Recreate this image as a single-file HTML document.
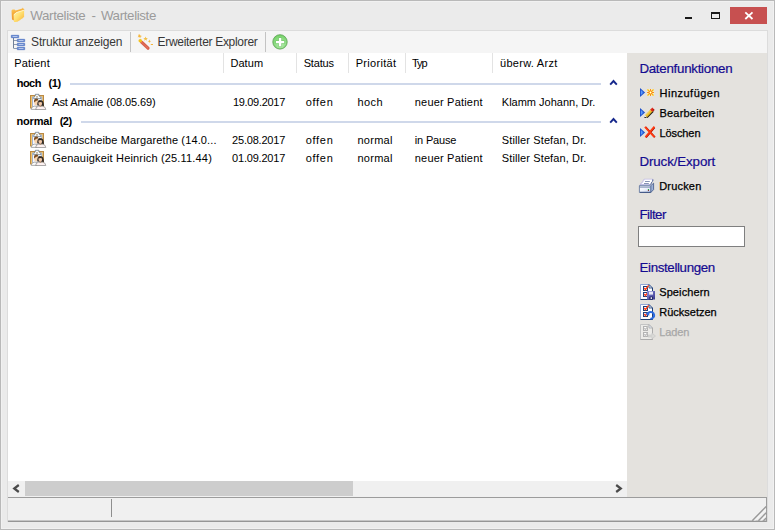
<!DOCTYPE html>
<html lang="de"><head><meta charset="utf-8"><title>Warteliste - Warteliste</title>
<style>
html,body{margin:0;padding:0}
body{width:775px;height:530px;overflow:hidden;position:relative;background:#ebebeb;font-family:"Liberation Sans", sans-serif}
.a{position:absolute}
.x{position:absolute;white-space:pre;line-height:1}
svg{position:absolute;overflow:visible}

.win{left:0;top:0;width:773px;height:528px;border:1px solid #b9b9b9;background:#ebebeb;box-shadow:inset 0 0 0 1px #f1f1f1}
.frame{left:7px;top:30px;width:759px;height:490px;border:1px solid #dcdcdc;background:#fff}
.tb{left:8px;top:31px;width:759px;height:22px;background:#f5f5f5}
.sep{width:1px;height:20px;top:32px;background:#c3c3c3}
.side{left:627px;top:53px;width:140px;height:444px;background:#e4e2de}
.hsep{width:1px;top:53px;height:20px;background:#e3e3e3}
.gl{height:2px;background:#cfd8ea}
.sbt{left:8px;top:481px;width:619px;height:16px;background:#f0f0f0}
.sbth{left:25px;top:481px;width:328px;height:15px;background:#cdcdcd}
.stat{left:8px;top:497px;width:759px;height:23px;background:#f0f0f0;border-top:1px solid #9c9c9c;border-bottom:1px solid #c6c6c6;box-sizing:border-box;height:24px}
.inp{left:638px;top:226px;width:105px;height:19px;border:1px solid #7f7f7f;background:#fff}
.close{left:730px;top:7px;width:37px;height:17px;background:#c75050}

</style></head><body>

<div class="a win"></div>
<div class="a frame"></div>
<!-- title bar -->
<svg style="left:11px;top:7px" width="15" height="16" viewBox="0 0 15 16">
<defs><linearGradient id="fo" x1="0" y1="0" x2="1" y2="1"><stop offset="0" stop-color="#fff6b8"/><stop offset="0.5" stop-color="#ffdf70"/><stop offset="1" stop-color="#f7b036"/></linearGradient><linearGradient id="fb" x1="0" y1="0" x2="0.3" y2="1"><stop offset="0" stop-color="#ffd266"/><stop offset="0.5" stop-color="#f5a935"/><stop offset="1" stop-color="#ee9a2c"/></linearGradient></defs>
<path d="M0.5 3.4 L1.5 2.5 L3.6 2.5 L4.6 3.6 L11.3 1.4 L11.6 0.6 L12.4 1.6 L13.6 2.9 L5.5 5.4 L2.9 7.8 L2.9 13.4 L1 12.4 Z" fill="url(#fb)"/>
<path d="M2.7 7.6 L5.5 5.2 L13.1 2.9 L13.1 10.3 L12 10.5 L12 11.2 L10.8 11.4 L10.8 12.1 L9.6 12.3 L9.6 13 L8.4 13.2 L8.4 13.8 L7.2 14 L7.2 14.6 L6 14.7 L4.6 14.9 L3 14.9 Z" fill="url(#fo)"/>
<path d="M2.9 7.8 L5.6 5.5 L13 3.2" fill="none" stroke="#fffbe0" stroke-width="0.7"/>
</svg>
<div class="a" style="left:685px;top:17px;width:7px;height:2px;background:#1a1a1a"></div>
<div class="a" style="left:711px;top:12px;width:7px;height:4px;border:1px solid #1a1a1a;border-top-width:2px"></div>
<div class="a close"></div>
<svg style="left:744px;top:11px" width="10" height="9" viewBox="0 0 10 9"><path d="M1.3 1.4 L8.5 8 M8.5 1.4 L1.3 8" stroke="#fff" stroke-width="1.8" fill="none"/></svg>
<!-- toolbar -->
<div class="a tb"></div>
<svg style="left:11px;top:35px" width="14" height="15" viewBox="0 0 14 15">
<path d="M2.5 3 V13.5" fill="none" stroke="#70809a" stroke-width="1"/><path d="M3 13.5 H6 M3 5.5 H6 M3 9.5 H6" fill="none" stroke="#8e9bb0" stroke-width="1"/>
<g fill="#5b80cc" stroke="#4a6fc0" stroke-width="0.6"><rect x="0.3" y="0.3" width="7.4" height="2.4" rx="0.25"/><rect x="6.3" y="4.3" width="7.4" height="2.4" rx="0.25"/><rect x="6.3" y="8.3" width="7.4" height="2.4" rx="0.25"/><rect x="6.3" y="12.3" width="7.4" height="2.4" rx="0.25"/></g>
<g fill="#b4c6ec"><rect x="1.5" y="1" width="5" height="1"/><rect x="7.5" y="5" width="5" height="1"/><rect x="7.5" y="9" width="5" height="1"/><rect x="7.5" y="13" width="5" height="1"/></g>
</svg>
<div class="a sep" style="left:130px"></div>
<svg style="left:137px;top:33px" width="17" height="17" viewBox="0 0 17 17">
<path d="M4.6 9.2 L11 15.2" stroke="#d9604a" stroke-width="3.2" stroke-linecap="round"/>
<path d="M4.4 9 L11 15.2" stroke="#f0907a" stroke-width="1" stroke-dasharray="0.8 0.8"/>
<circle cx="3.3" cy="7.8" r="1.8" fill="#f2c21e"/>
<path d="M2.6 0.8 L3.3 2.4 L5 2.9 L3.5 3.7 L3.3 5.4 L2.3 4 L0.6 4.2 L1.6 2.9 L1 1.4 L2.3 2.1 Z" fill="#f5b63c"/>
<path d="M8.6 3.4 L9.2 5 L11 5 L9.6 6.1 L10.1 7.8 L8.6 6.8 L7.2 7.8 L7.6 6.1 L6.2 5 L8 5 Z" fill="#f2c04a"/>
<path d="M12.4 6.6 L12.9 7.8 L14.1 8.3 L12.9 8.8 L12.4 10 L11.9 8.8 L10.7 8.3 L11.9 7.8 Z" fill="#f5b63c"/>
<rect x="13.8" y="11" width="2.2" height="1" fill="#f5b63c"/>
</svg>
<div class="a sep" style="left:265px"></div>
<svg style="left:272px;top:34px" width="16" height="16" viewBox="0 0 16 16">
<defs><radialGradient id="gp" cx="0.55" cy="0.7" r="0.75"><stop offset="0" stop-color="#b4eaac"/><stop offset="0.55" stop-color="#8edc84"/><stop offset="1" stop-color="#6fd062"/></radialGradient></defs>
<circle cx="8" cy="7.9" r="7.7" fill="#cfcfcf"/>
<circle cx="8" cy="7.9" r="7.1" fill="url(#gp)" stroke="#62b058" stroke-width="0.9"/>
<path d="M6.5 3.6 H9.7 V6.5 H12.6 V9.7 H9.7 V12.6 H6.5 V9.7 H3.6 V6.5 H6.5 Z" fill="#6cc062"/><path d="M6.9 4 H9.3 V6.9 H12.2 V9.3 H9.3 V12.2 H6.9 V9.3 H4 V6.9 H6.9 Z" fill="#fff"/>
</svg>
<!-- list -->
<div class="a hsep" style="left:223px"></div>
<div class="a hsep" style="left:296px"></div>
<div class="a hsep" style="left:348px"></div>
<div class="a hsep" style="left:405px"></div>
<div class="a hsep" style="left:492px"></div>
<div class="a gl" style="left:70px;top:83px;width:531px"></div>
<div class="a gl" style="left:81px;top:121px;width:520px"></div>
<svg style="left:609px;top:79px" width="9" height="7" viewBox="0 0 9 7"><path d="M1.2 5.6 L4.5 2 L7.8 5.6" fill="none" stroke="#16288c" stroke-width="1.9"/></svg>
<svg style="left:609px;top:117px" width="9" height="7" viewBox="0 0 9 7"><path d="M1.2 5.6 L4.5 2 L7.8 5.6" fill="none" stroke="#16288c" stroke-width="1.9"/></svg>
<svg style="left:30px;top:94px" width="16" height="16" viewBox="0 0 16 16">
<rect x="0.5" y="1.5" width="13" height="12.5" fill="#f4c466" stroke="#bb8a44"/>
<rect x="2.4" y="3" width="9.4" height="11" fill="#f4f7fd" stroke="#92a8d2" stroke-width="0.8"/>
<path d="M3.6 4.6 L3.9 3.4 L5.3 1.6 L5.3 0.3 L8.9 0.3 L8.9 1.6 L10.6 3.4 L11 4.6 Z" fill="#f7fafb" stroke="#5d6f7c" stroke-width="0.7"/>
<rect x="6.5" y="2.2" width="1" height="1.4" fill="#7a5a2a"/>
<path d="M1.2 15.4 Q1.3 12.6 4.2 12.2 L7 12.2 L7 15.4 Z" fill="#fcfcfc" stroke="#8c8c8c" stroke-width="0.7"/>
<ellipse cx="6.1" cy="8.6" rx="1.9" ry="3" fill="#f8d4ae"/>
<path d="M4 7.6 Q3.9 4.6 6.4 4.6 Q8.6 4.7 8.3 6.6 Q6 5.8 4.6 8.6 Z" fill="#7e4e22"/>
<path d="M7.3 11.6 Q6.8 5.8 10.4 5.9 Q14 5.9 13.9 12 Z" fill="#2c2826"/>
<path d="M5.6 15.5 Q5.8 12.6 8.6 12.2 L12.6 12.2 Q15.7 12.6 15.8 15.5 Z" fill="#fdf1f1" stroke="#868686" stroke-width="0.7"/>
<rect x="9.6" y="10.6" width="1.6" height="2.2" fill="#b48a6a"/>
<ellipse cx="10.3" cy="9" rx="1.9" ry="2.5" fill="#efc6a6"/>
<path d="M8.3 8.6 Q8.6 6.4 10.6 6.5 Q12.4 6.7 12.4 8.8 Q10.6 7.4 8.3 8.6Z" fill="#2c2826"/>
</svg>
<svg style="left:30px;top:132px" width="16" height="16" viewBox="0 0 16 16">
<rect x="0.5" y="1.5" width="13" height="12.5" fill="#f4c466" stroke="#bb8a44"/>
<rect x="2.4" y="3" width="9.4" height="11" fill="#f4f7fd" stroke="#92a8d2" stroke-width="0.8"/>
<path d="M3.6 4.6 L3.9 3.4 L5.3 1.6 L5.3 0.3 L8.9 0.3 L8.9 1.6 L10.6 3.4 L11 4.6 Z" fill="#f7fafb" stroke="#5d6f7c" stroke-width="0.7"/>
<rect x="6.5" y="2.2" width="1" height="1.4" fill="#7a5a2a"/>
<path d="M1.2 15.4 Q1.3 12.6 4.2 12.2 L7 12.2 L7 15.4 Z" fill="#fcfcfc" stroke="#8c8c8c" stroke-width="0.7"/>
<ellipse cx="6.1" cy="8.6" rx="1.9" ry="3" fill="#f8d4ae"/>
<path d="M4 7.6 Q3.9 4.6 6.4 4.6 Q8.6 4.7 8.3 6.6 Q6 5.8 4.6 8.6 Z" fill="#7e4e22"/>
<path d="M7.3 11.6 Q6.8 5.8 10.4 5.9 Q14 5.9 13.9 12 Z" fill="#2c2826"/>
<path d="M5.6 15.5 Q5.8 12.6 8.6 12.2 L12.6 12.2 Q15.7 12.6 15.8 15.5 Z" fill="#fdf1f1" stroke="#868686" stroke-width="0.7"/>
<rect x="9.6" y="10.6" width="1.6" height="2.2" fill="#b48a6a"/>
<ellipse cx="10.3" cy="9" rx="1.9" ry="2.5" fill="#efc6a6"/>
<path d="M8.3 8.6 Q8.6 6.4 10.6 6.5 Q12.4 6.7 12.4 8.8 Q10.6 7.4 8.3 8.6Z" fill="#2c2826"/>
</svg>
<svg style="left:30px;top:150px" width="16" height="16" viewBox="0 0 16 16">
<rect x="0.5" y="1.5" width="13" height="12.5" fill="#f4c466" stroke="#bb8a44"/>
<rect x="2.4" y="3" width="9.4" height="11" fill="#f4f7fd" stroke="#92a8d2" stroke-width="0.8"/>
<path d="M3.6 4.6 L3.9 3.4 L5.3 1.6 L5.3 0.3 L8.9 0.3 L8.9 1.6 L10.6 3.4 L11 4.6 Z" fill="#f7fafb" stroke="#5d6f7c" stroke-width="0.7"/>
<rect x="6.5" y="2.2" width="1" height="1.4" fill="#7a5a2a"/>
<path d="M1.2 15.4 Q1.3 12.6 4.2 12.2 L7 12.2 L7 15.4 Z" fill="#fcfcfc" stroke="#8c8c8c" stroke-width="0.7"/>
<ellipse cx="6.1" cy="8.6" rx="1.9" ry="3" fill="#f8d4ae"/>
<path d="M4 7.6 Q3.9 4.6 6.4 4.6 Q8.6 4.7 8.3 6.6 Q6 5.8 4.6 8.6 Z" fill="#7e4e22"/>
<path d="M7.3 11.6 Q6.8 5.8 10.4 5.9 Q14 5.9 13.9 12 Z" fill="#2c2826"/>
<path d="M5.6 15.5 Q5.8 12.6 8.6 12.2 L12.6 12.2 Q15.7 12.6 15.8 15.5 Z" fill="#fdf1f1" stroke="#868686" stroke-width="0.7"/>
<rect x="9.6" y="10.6" width="1.6" height="2.2" fill="#b48a6a"/>
<ellipse cx="10.3" cy="9" rx="1.9" ry="2.5" fill="#efc6a6"/>
<path d="M8.3 8.6 Q8.6 6.4 10.6 6.5 Q12.4 6.7 12.4 8.8 Q10.6 7.4 8.3 8.6Z" fill="#2c2826"/>
</svg>
<!-- scrollbar -->
<div class="a sbt"></div>
<div class="a sbth"></div>
<svg style="left:12px;top:484px" width="8" height="9" viewBox="0 0 8 9"><path d="M6.8 1 L2.2 4.5 L6.8 8" fill="none" stroke="#4a4a4a" stroke-width="2.2"/></svg>
<svg style="left:615px;top:484px" width="8" height="9" viewBox="0 0 8 9"><path d="M1.2 1 L5.8 4.5 L1.2 8" fill="none" stroke="#4a4a4a" stroke-width="2.2"/></svg>
<!-- side panel -->
<div class="a side"></div>
<svg style="left:640px;top:88px" width="6" height="9" viewBox="0 0 6 9"><defs><linearGradient id="tg64088" x1="0" x2="1"><stop offset="0" stop-color="#6aa6ff"/><stop offset="1" stop-color="#2a6ae6"/></linearGradient></defs><path d="M0 0 L5.1 4.5 L0 9 Z" fill="#1c50cc"/><path d="M0.9 2 L3.7 4.5 L0.9 7 Z" fill="url(#tg64088)"/></svg>
<svg style="left:647px;top:89px" width="7" height="7" viewBox="0 0 7 7"><rect x="0" y="0" width="7" height="7" fill="#fdf7b0" opacity="0.75"/><path d="M3.5 0 V7 M0 3.5 H7" stroke="#fa8a1a" stroke-width="1"/><path d="M0.5 0.5 L6.5 6.5 M6.5 0.5 L0.5 6.5" stroke="#f9b010" stroke-width="1.2"/><path d="M3.5 1.6 L5.4 3.5 L3.5 5.4 L1.6 3.5 Z" fill="#ffe64a" stroke="#f8662a" stroke-width="0.8"/><rect x="3" y="3" width="1" height="1" fill="#fff"/></svg>
<svg style="left:640px;top:108px" width="6" height="9" viewBox="0 0 6 9"><defs><linearGradient id="tg640108" x1="0" x2="1"><stop offset="0" stop-color="#6aa6ff"/><stop offset="1" stop-color="#2a6ae6"/></linearGradient></defs><path d="M0 0 L5.1 4.5 L0 9 Z" fill="#1c50cc"/><path d="M0.9 2 L3.7 4.5 L0.9 7 Z" fill="url(#tg640108)"/></svg>
<svg style="left:644px;top:108px" width="11" height="10" viewBox="0 0 11 10"><path d="M2.6 9.2 L8.8 2.8" stroke="#1c1a14" stroke-width="2.6"/><path d="M2 8.2 L8 2" stroke="#e9bb24" stroke-width="2.8"/><path d="M1.8 7.6 L7.6 1.6" stroke="#f8dc6a" stroke-width="0.9"/><path d="M7.2 2.8 L9.4 0.6" stroke="#e0281a" stroke-width="3"/><path d="M9 2.6 L10 1.4" stroke="#a8160e" stroke-width="1.6"/><path d="M0.4 9.9 L1 7.4 L3 9.2 Z" fill="#f4f4f0"/><path d="M0.3 10 L0.7 8.8 L3.4 9.9 Z" fill="#111"/></svg>
<svg style="left:640px;top:128px" width="6" height="9" viewBox="0 0 6 9"><defs><linearGradient id="tg640128" x1="0" x2="1"><stop offset="0" stop-color="#6aa6ff"/><stop offset="1" stop-color="#2a6ae6"/></linearGradient></defs><path d="M0 0 L5.1 4.5 L0 9 Z" fill="#1c50cc"/><path d="M0.9 2 L3.7 4.5 L0.9 7 Z" fill="url(#tg640128)"/></svg>
<svg style="left:644px;top:126px" width="12" height="12" viewBox="0 0 12 12"><path d="M1.6 1 L11 11.2 M10.6 1.6 L2 11.6" stroke="#a40800" stroke-width="1.6"/><path d="M0.9 0.9 L10.4 11.2 M10.4 0.7 L1.4 11.2" stroke="#ff3a10" stroke-width="1.8"/></svg>
<svg style="left:639px;top:179px" width="15" height="14" viewBox="0 0 15 14">
<defs><linearGradient id="pf" x1="0" y1="0" x2="1" y2="1"><stop offset="0" stop-color="#ffffff"/><stop offset="0.5" stop-color="#eef2fb"/><stop offset="1" stop-color="#bccbe8"/></linearGradient></defs>
<path d="M11.7 7 L14.6 4.2 L14.6 10.6 L11.7 13.6 Z" fill="#9db1d8" stroke="#3f5686" stroke-width="0.8"/>
<path d="M0.4 6.8 L2 5.4 L13.6 5.4 L11.7 7 Z" fill="#dde5f4" stroke="#6e82a8" stroke-width="0.6"/>
<path d="M0.4 6.8 H11.7 V13.5 H0.4 Z" fill="url(#pf)" stroke="#566c96" stroke-width="0.8"/>
<path d="M0.6 8.2 H11.5" stroke="#6a80a8" stroke-width="0.8"/>
<path d="M1 13.3 H11.6" stroke="#3c5282" stroke-width="1"/>
<path d="M1.2 5.6 L1.2 5 L2.2 5 L2.2 4 L3.2 4 L3.2 3 L4.1 3 L4.1 1.2 L5.1 1.2 L5.1 0.2 L13.8 0.2 L13.8 2 L12.6 3.2 L12.6 4 L11.6 4.8 L11 5.6 Z" fill="#ffffff" stroke="#aca6e2" stroke-width="0.5"/>
<path d="M13.8 0.4 L13.8 2 L12.6 3.2 L12.6 4 L11.2 5.6" fill="none" stroke="#4a6090" stroke-width="0.9"/>
<path d="M6 2.5 H10.8 M5 4.5 H9.8" stroke="#8794b4" stroke-width="1"/>
<rect x="8.9" y="10" width="1" height="1" fill="#22a030"/><rect x="8.9" y="11" width="1" height="1" fill="#7a3020"/>
</svg>
<div class="a inp"></div>
<svg style="left:640px;top:284px" width="16" height="16" viewBox="0 0 16 16">
<path d="M0.5 0.5 L9 0.5 L12.5 4 L12.5 15.5 L0.5 15.5 Z" fill="#fdfdff" stroke="#8fa6d6"/>
<path d="M12.5 4 L12.5 15.5 L0.5 15.5" fill="none" stroke="#1d3c72"/>
<path d="M9 0.5 L9 4 L12.5 4 Z" fill="#dfe7f5" stroke="#1d3c72" stroke-width="0.8"/>
<rect x="3.5" y="2.5" width="4" height="4" fill="#fff" stroke="#1f3f78"/>
<rect x="3.5" y="8.5" width="4" height="4" fill="#fff" stroke="#1f3f78"/>
<path d="M4.3 4 L5.5 5.6 L8.6 1.3" fill="none" stroke="#ff3a12" stroke-width="1.3"/>
<path d="M4.3 10 L5.5 11.6 L7.4 9" fill="none" stroke="#ff3a12" stroke-width="1.3"/>
<defs><linearGradient id="fl" x1="0" y1="0" x2="1" y2="1"><stop offset="0" stop-color="#8f8fe0"/><stop offset="1" stop-color="#35358a"/></linearGradient></defs>
<rect x="7" y="7" width="8" height="8.5" fill="url(#fl)"/>
<rect x="9" y="7.6" width="4" height="3" fill="#e8e8f6"/>
<rect x="9.4" y="12.6" width="3.4" height="2.9" fill="#20205a"/>
<rect x="10.6" y="13.2" width="1.4" height="1.8" fill="#e0e0f0"/></svg>
<svg style="left:640px;top:304px" width="16" height="16" viewBox="0 0 16 16">
<path d="M0.5 0.5 L9 0.5 L12.5 4 L12.5 15.5 L0.5 15.5 Z" fill="#fdfdff" stroke="#8fa6d6"/>
<path d="M12.5 4 L12.5 15.5 L0.5 15.5" fill="none" stroke="#1d3c72"/>
<path d="M9 0.5 L9 4 L12.5 4 Z" fill="#dfe7f5" stroke="#1d3c72" stroke-width="0.8"/>
<rect x="3.5" y="2.5" width="4" height="4" fill="#fff" stroke="#1f3f78"/>
<rect x="3.5" y="8.5" width="4" height="4" fill="#fff" stroke="#1f3f78"/>
<path d="M4.3 4 L5.5 5.6 L8.6 1.3" fill="none" stroke="#ff3a12" stroke-width="1.3"/>
<path d="M4.3 10 L5.5 11.6 L7.4 9" fill="none" stroke="#ff3a12" stroke-width="1.3"/>
<path d="M7.5 9.2 Q11.5 6.6 13.6 9.4 Q15.2 12.4 12.4 14.2 L10.4 14.8" fill="none" stroke="#2a6ae0" stroke-width="1.9"/>
<path d="M5.2 9.9 L9.4 7.4 L9.2 11.8 Z" fill="#2a6ae0"/></svg>
<svg style="left:640px;top:324px" width="16" height="16" viewBox="0 0 16 16">
<path d="M0.5 0.5 L9 0.5 L12.5 4 L12.5 15.5 L0.5 15.5 Z" fill="#ecebe8" stroke="#c4c4c4"/>
<path d="M12.5 4 L12.5 15.5 L0.5 15.5" fill="none" stroke="#ababab"/>
<path d="M9 0.5 L9 4 L12.5 4 Z" fill="#dfe7f5" stroke="#ababab" stroke-width="0.8"/>
<rect x="3.5" y="2.5" width="4" height="4" fill="#fff" stroke="#b2b2b2"/>
<rect x="3.5" y="8.5" width="4" height="4" fill="#fff" stroke="#b2b2b2"/>
<path d="M4.3 4 L5.5 5.6 L8.6 1.3" fill="none" stroke="#c2c2c2" stroke-width="1.3"/>
<path d="M4.3 10 L5.5 11.6 L7.4 9" fill="none" stroke="#c2c2c2" stroke-width="1.3"/>
<path d="M8 11 L12 11 L12 9 L15.5 12 L12 15 L12 13 L8 13 Z" fill="#d9d9d6" stroke="#c2c2c2" stroke-width="0.6"/></svg>
<!-- status bar -->
<div class="a stat"></div>
<div class="a" style="left:8px;top:521px;width:759px;height:1px;background:#969696"></div>
<div class="a" style="left:766px;top:497px;width:1px;height:25px;background:#9c9c9c"></div>
<div class="a" style="left:111px;top:499px;width:1px;height:18px;background:#8e8e8e"></div>
<svg style="left:752px;top:506px" width="14" height="15" viewBox="0 0 14 15"><path d="M0.2 14.8 L14.2 0.4 M6.4 14.8 L14.2 6.8 M11.4 14.8 L14.2 12" stroke="#9a9a9a" stroke-width="1.4"/><path d="M2.6 14.8 L14.2 3 M8.8 14.8 L14.2 9.4" stroke="#fff" stroke-width="0.9" stroke-dasharray="1 1"/></svg>

<span class="x" style="left:30.3px;top:8.72px;font-size:13.33px;color:#9b9b9b;letter-spacing:-0.363px">Warteliste</span>
<span class="x" style="left:91.6px;top:8.72px;font-size:13.33px;color:#9b9b9b;letter-spacing:0.000px">-</span>
<span class="x" style="left:100.9px;top:8.72px;font-size:13.33px;color:#9b9b9b;letter-spacing:-0.363px">Warteliste</span>
<span class="x" style="left:31.1px;top:35.84px;font-size:12.0px;color:#383838;letter-spacing:-0.166px">Struktur anzeigen</span>
<span class="x" style="left:157.5px;top:35.84px;font-size:12.0px;color:#383838;letter-spacing:-0.302px">Erweiterter Explorer</span>
<span class="x" style="left:14.2px;top:57.69px;font-size:11px;color:#000;letter-spacing:0.208px">Patient</span>
<span class="x" style="left:230.4px;top:57.69px;font-size:11px;color:#000;letter-spacing:0.073px">Datum</span>
<span class="x" style="left:303.7px;top:57.69px;font-size:11px;color:#000;letter-spacing:-0.158px">Status</span>
<span class="x" style="left:355.7px;top:57.69px;font-size:11px;color:#000;letter-spacing:0.299px">Priorität</span>
<span class="x" style="left:411.9px;top:57.69px;font-size:11px;color:#000;letter-spacing:-1.017px">Typ</span>
<span class="x" style="left:500.0px;top:57.69px;font-size:11px;color:#000;letter-spacing:0.288px">überw. Arzt</span>
<span class="x" style="left:16.8px;top:77.69px;font-size:11px;font-weight:700;color:#000;letter-spacing:-0.560px">hoch</span>
<span class="x" style="left:48.4px;top:77.69px;font-size:11px;font-weight:700;color:#000;letter-spacing:-0.377px">(1)</span>
<span class="x" style="left:16.6px;top:115.69px;font-size:11px;font-weight:700;color:#000;letter-spacing:-0.217px">normal</span>
<span class="x" style="left:59.7px;top:115.69px;font-size:11px;font-weight:700;color:#000;letter-spacing:-0.527px">(2)</span>
<span class="x" style="left:52.2px;top:96.69px;font-size:11px;color:#000;letter-spacing:-0.079px">Ast Amalie (08.05.69)</span>
<span class="x" style="left:52.5px;top:134.69px;font-size:11px;color:#000;letter-spacing:0.126px">Bandscheibe Margarethe (14.0...</span>
<span class="x" style="left:52.3px;top:152.69px;font-size:11px;color:#000;letter-spacing:0.167px">Genauigkeit Heinrich (25.11.44)</span>
<span class="x" style="left:232.9px;top:96.69px;font-size:11px;color:#000;letter-spacing:-0.296px">19.09.2017</span>
<span class="x" style="left:232.1px;top:134.69px;font-size:11px;color:#000;letter-spacing:-0.207px">25.08.2017</span>
<span class="x" style="left:232.1px;top:152.69px;font-size:11px;color:#000;letter-spacing:-0.207px">01.09.2017</span>
<span class="x" style="left:305.7px;top:96.69px;font-size:11px;color:#000;letter-spacing:0.705px">offen</span>
<span class="x" style="left:305.7px;top:134.69px;font-size:11px;color:#000;letter-spacing:0.705px">offen</span>
<span class="x" style="left:305.7px;top:152.69px;font-size:11px;color:#000;letter-spacing:0.705px">offen</span>
<span class="x" style="left:357.5px;top:96.69px;font-size:11px;color:#000;letter-spacing:0.414px">hoch</span>
<span class="x" style="left:357.5px;top:134.69px;font-size:11px;color:#000;letter-spacing:0.255px">normal</span>
<span class="x" style="left:357.5px;top:152.69px;font-size:11px;color:#000;letter-spacing:0.255px">normal</span>
<span class="x" style="left:414.8px;top:96.69px;font-size:11px;color:#000;letter-spacing:0.189px">neuer Patient</span>
<span class="x" style="left:414.8px;top:134.69px;font-size:11px;color:#000;letter-spacing:-0.173px">in Pause</span>
<span class="x" style="left:414.8px;top:152.69px;font-size:11px;color:#000;letter-spacing:0.189px">neuer Patient</span>
<span class="x" style="left:501.8px;top:96.69px;font-size:11px;color:#000;letter-spacing:-0.003px">Klamm Johann, Dr.</span>
<span class="x" style="left:501.8px;top:134.69px;font-size:11px;color:#000;letter-spacing:0.114px">Stiller Stefan, Dr.</span>
<span class="x" style="left:501.8px;top:152.69px;font-size:11px;color:#000;letter-spacing:0.114px">Stiller Stefan, Dr.</span>
<span class="x" style="left:639.4px;top:61.72px;font-size:13.33px;-webkit-text-stroke:0.2px #140a90;color:#140a90;letter-spacing:-0.277px">Datenfunktionen</span>
<span class="x" style="left:639.5px;top:154.72px;font-size:13.33px;-webkit-text-stroke:0.2px #140a90;color:#140a90;letter-spacing:-0.121px">Druck/Export</span>
<span class="x" style="left:639.5px;top:207.72px;font-size:13.33px;-webkit-text-stroke:0.2px #140a90;color:#140a90;letter-spacing:-0.545px">Filter</span>
<span class="x" style="left:639.5px;top:260.72px;font-size:13.33px;-webkit-text-stroke:0.2px #140a90;color:#140a90;letter-spacing:-0.361px">Einstellungen</span>
<span class="x" style="left:659.5px;top:87.69px;font-size:11.0px;-webkit-text-stroke:0.25px #000;color:#000;letter-spacing:0.494px">Hinzufügen</span>
<span class="x" style="left:659.5px;top:107.69px;font-size:11.0px;-webkit-text-stroke:0.25px #000;color:#000;letter-spacing:0.198px">Bearbeiten</span>
<span class="x" style="left:659.5px;top:127.69px;font-size:11.0px;-webkit-text-stroke:0.25px #000;color:#000;letter-spacing:-0.099px">Löschen</span>
<span class="x" style="left:659.2px;top:180.69px;font-size:11.0px;-webkit-text-stroke:0.25px #000;color:#000;letter-spacing:0.189px">Drucken</span>
<span class="x" style="left:659.2px;top:286.69px;font-size:11.0px;-webkit-text-stroke:0.25px #000;color:#000;letter-spacing:0.107px">Speichern</span>
<span class="x" style="left:659.2px;top:306.69px;font-size:11.0px;-webkit-text-stroke:0.25px #000;color:#000;letter-spacing:0.002px">Rücksetzen</span>
<span class="x" style="left:659.2px;top:326.69px;font-size:11.0px;-webkit-text-stroke:0.25px #a7a7a7;color:#a7a7a7;letter-spacing:-0.123px">Laden</span>
</body></html>
